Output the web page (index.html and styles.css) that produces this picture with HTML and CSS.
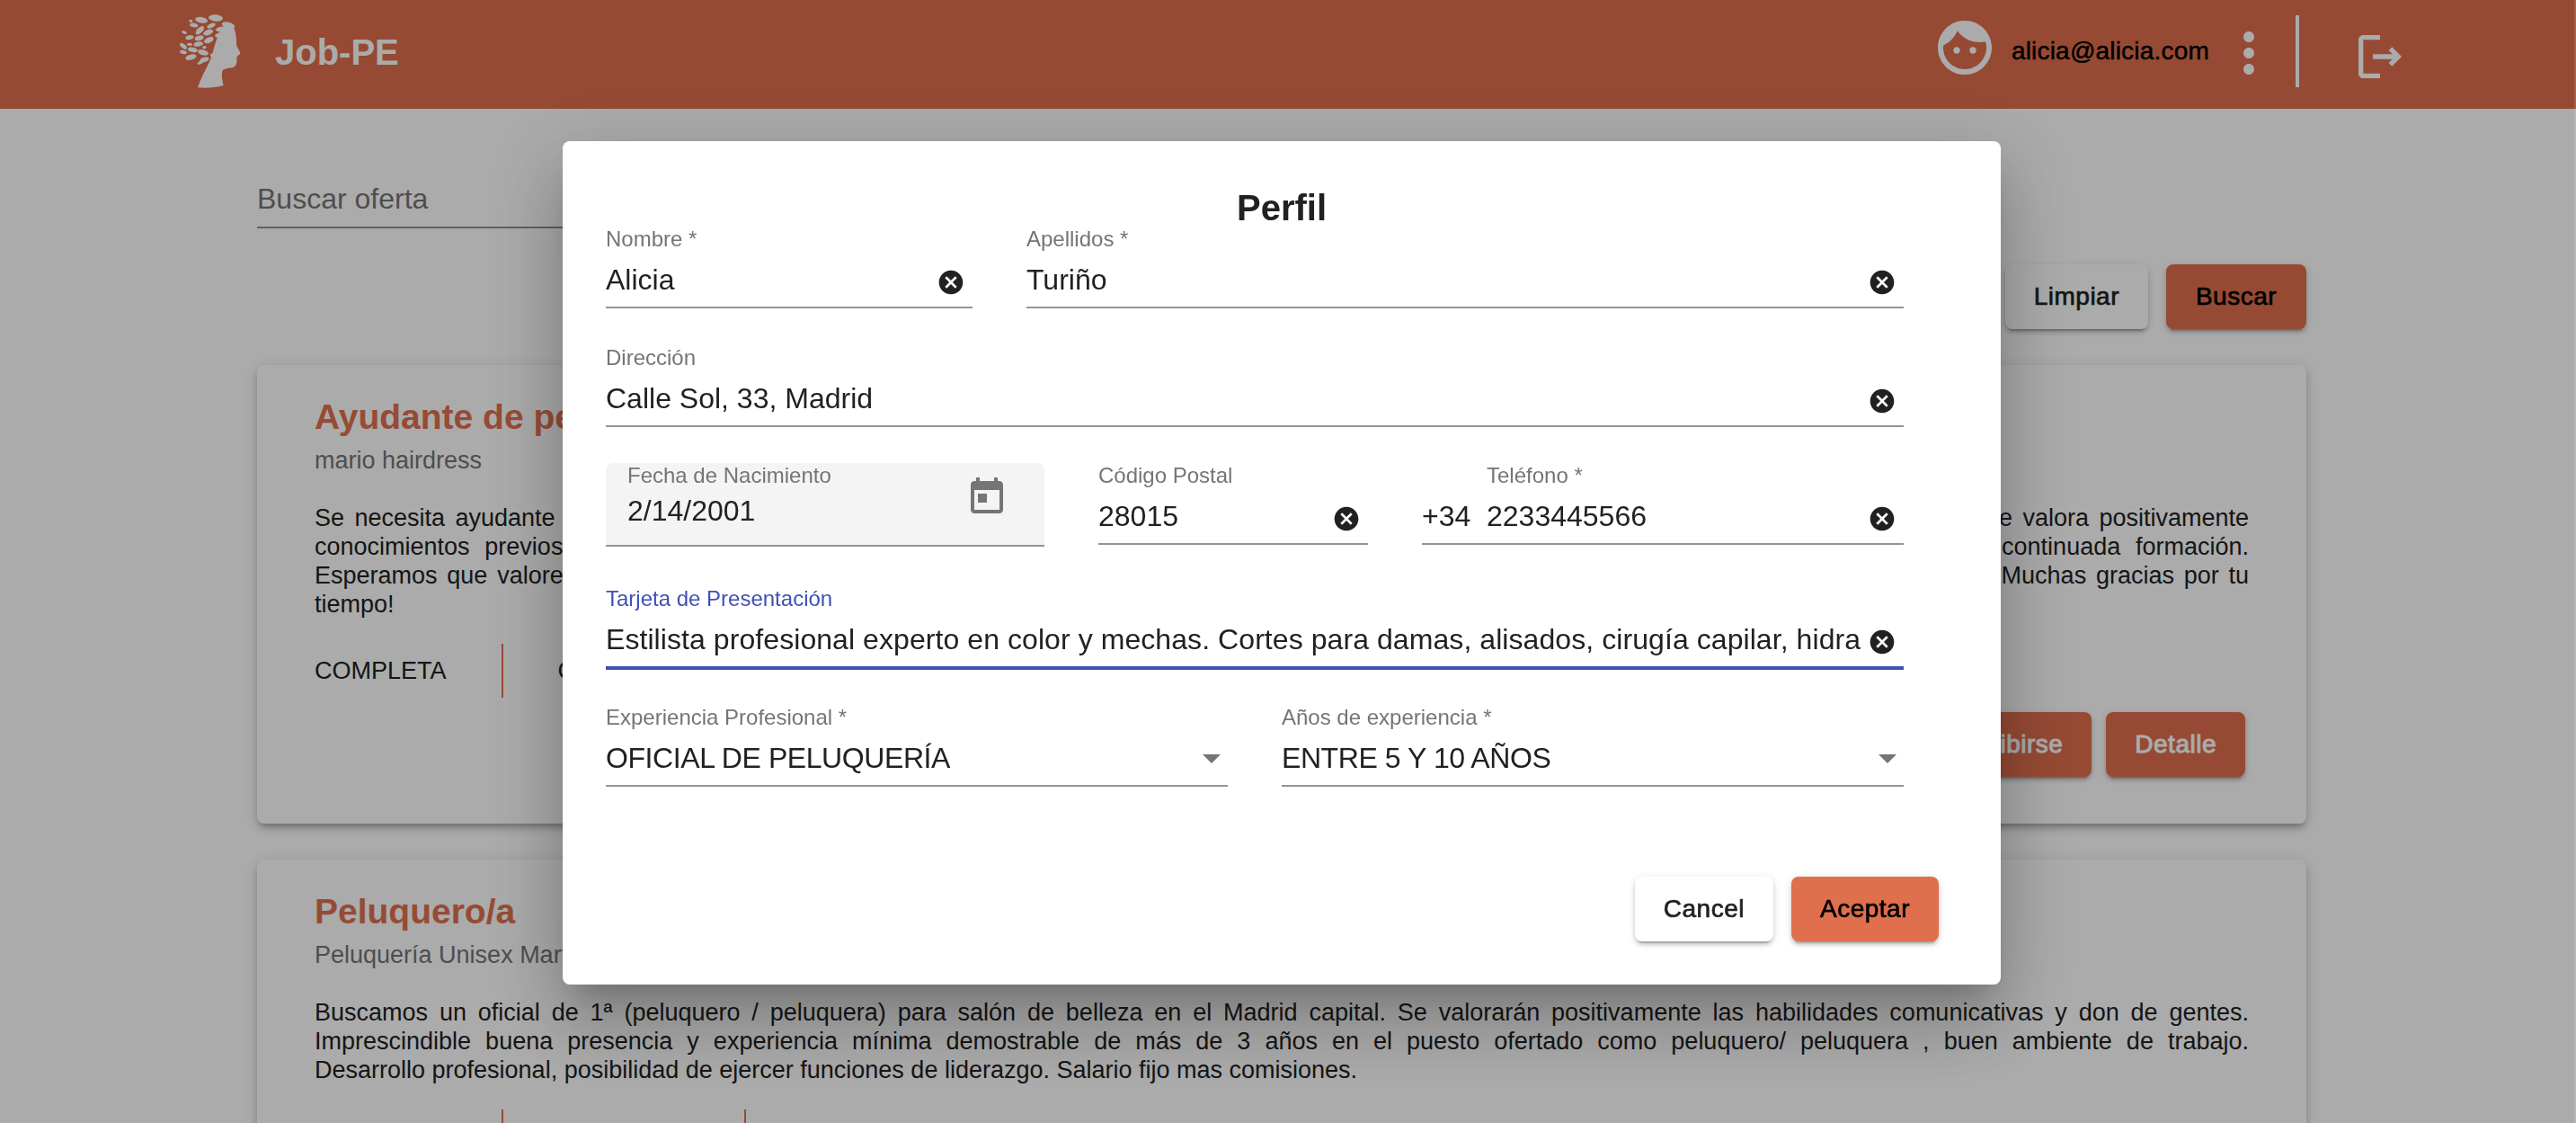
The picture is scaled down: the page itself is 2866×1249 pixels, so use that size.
FILE: index.html
```html
<!DOCTYPE html>
<html lang="es">
<head>
    <meta charset="UTF-8">
    <title>Job-PE</title>
    <link rel="stylesheet" href="styles.css">
</head>
<body>
<header class="topbar">
    <svg class="logo" viewBox="0 0 360 330" fill="#fff">
        <path d="M120 292 C130 262 145 235 160 205 C172 175 178 135 195 105 C205 85 222 72 232 80 C246 92 250 125 249 150 C252 160 262 172 262 179 C258 184 251 186 250 192 C252 205 250 218 240 224 C228 228 212 226 202 236 C198 255 203 272 206 285 C180 292 148 295 120 292 Z"/>
        <g>
            <ellipse cx="180" cy="60" rx="24" ry="11" transform="rotate(5 180 60)"/>
            <ellipse cx="132" cy="67" rx="21" ry="10" transform="rotate(10 132 67)"/>
            <ellipse cx="222" cy="84" rx="22" ry="10" transform="rotate(15 222 84)"/>
            <ellipse cx="107" cy="84" rx="14" ry="7" transform="rotate(10 107 84)"/>
            <ellipse cx="97" cy="70" rx="6" ry="5"/>
            <ellipse cx="127" cy="101" rx="18" ry="9" transform="rotate(-45 127 101)"/>
            <ellipse cx="165" cy="86" rx="15" ry="7" transform="rotate(-25 165 86)"/>
            <ellipse cx="197" cy="97" rx="17" ry="8" transform="rotate(-10 197 97)"/>
            <ellipse cx="155" cy="108" rx="17" ry="9" transform="rotate(-20 155 108)"/>
            <ellipse cx="192" cy="116" rx="15" ry="7" transform="rotate(-20 192 116)"/>
            <ellipse cx="93" cy="125" rx="14" ry="7" transform="rotate(-10 93 125)"/>
            <ellipse cx="125" cy="127" rx="15" ry="8" transform="rotate(-15 125 127)"/>
            <ellipse cx="157" cy="134" rx="17" ry="9" transform="rotate(-25 157 134)"/>
            <ellipse cx="75" cy="108" rx="9" ry="5" transform="rotate(20 75 108)"/>
            <ellipse cx="72" cy="154" rx="14" ry="7" transform="rotate(40 72 154)"/>
            <ellipse cx="93" cy="148" rx="9" ry="5"/>
            <ellipse cx="122" cy="147" rx="16" ry="8" transform="rotate(-8 122 147)"/>
            <ellipse cx="103" cy="166" rx="17" ry="8" transform="rotate(10 103 166)"/>
            <ellipse cx="142" cy="158" rx="7" ry="5"/>
            <ellipse cx="72" cy="174" rx="12" ry="6" transform="rotate(10 72 174)"/>
            <ellipse cx="138" cy="175" rx="18" ry="9" transform="rotate(15 138 175)"/>
            <ellipse cx="170" cy="186" rx="9" ry="6" transform="rotate(30 170 186)"/>
            <ellipse cx="97" cy="191" rx="19" ry="9" transform="rotate(-15 97 191)"/>
            <ellipse cx="142" cy="199" rx="16" ry="8" transform="rotate(-15 142 199)"/>
            <ellipse cx="128" cy="209" rx="10" ry="5" transform="rotate(-25 128 209)"/>
        </g>
    </svg>
    <span class="brand">Job-PE</span>
    <div class="user-area">
        <svg class="face-icon" viewBox="0 0 24 24"><path d="M9 11.75c-.69 0-1.25.56-1.25 1.25s.56 1.25 1.25 1.25 1.25-.56 1.25-1.25-.56-1.25-1.25-1.25zm6 0c-.69 0-1.25.56-1.25 1.25s.56 1.25 1.25 1.25 1.25-.56 1.25-1.25-.56-1.25-1.25-1.25zM12 2C6.48 2 2 6.48 2 12s4.48 10 10 10 10-4.48 10-10S17.52 2 12 2zm0 18c-4.41 0-8-3.59-8-8 0-.29.02-.58.05-.86 2.36-1.05 4.23-2.98 5.21-5.37C11.07 8.33 14.05 10 17.42 10c.78 0 1.53-.09 2.25-.26.21.71.33 1.47.33 2.26 0 4.41-3.59 8-8 8z"/></svg>
        <span class="user-mail">alicia@alicia.com</span>
        <svg class="more-icon" viewBox="0 0 24 24"><path d="M12 8c1.1 0 2-.9 2-2s-.9-2-2-2-2 .9-2 2 .9 2 2 2zm0 2c-1.1 0-2 .9-2 2s.9 2 2 2 2-.9 2-2-.9-2-2-2zm0 6c-1.1 0-2 .9-2 2s.9 2 2 2 2-.9 2-2-.9-2-2-2z"/></svg>
        <span class="user-divider"></span>
        <svg class="logout-icon" viewBox="0 0 24 24"><path d="M17 8l-1.41 1.41L17.17 11H9v2h8.17l-1.58 1.58L17 16l4-4-4-4zM5 5h7V3H5c-1.1 0-2 .9-2 2v14c0 1.1.9 2 2 2h7v-2H5V5z"/></svg>
    </div>
</header>

<main class="content">
    <div class="search">Buscar oferta</div>
    <div class="search-actions">
        <button class="btn btn-plain">Limpiar</button>
        <button class="btn btn-dark">Buscar</button>
    </div>

    <!-- Ofertas -->
    <article class="card">
        <h2 class="card-title">Ayudante de peluquería</h2>
        <p class="card-company">mario hairdress</p>
        <p class="card-text">
            <span class="line">Se necesita ayudante de peluquería para nuevo salón de belleza situado en pleno centro de Madrid capital. No es imprescindible tener experiencia, se valora positivamente</span>
            <span class="line">conocimientos previos en lavado, corte y color. Ofrecemos un buen ambiente de trabajo, contrato estable y la posibilidad de crecer con una continuada formación.</span>
            <span class="line">Esperamos que valores esta oportunidad y que nos hagas llegar tu candidatura lo más pronto posible a través de esta misma página web de empleo. Muchas gracias por tu</span>
            tiempo!
        </p>
        <div class="card-meta">
            <span class="meta-item">COMPLETA</span>
            <span class="meta-item">COMPLETA</span>
            <span class="meta-item">MADRID</span>
        </div>
        <div class="card-actions">
            <button class="btn btn-light">Inscribirse</button>
            <button class="btn btn-light">Detalle</button>
        </div>
    </article>

    <article class="card">
        <h2 class="card-title">Peluquero/a</h2>
        <p class="card-company">Peluquería Unisex Marta</p>
        <p class="card-text">
            <span class="line">Buscamos un oficial de 1ª (peluquero / peluquera) para salón de belleza en el Madrid capital. Se valorarán positivamente las habilidades comunicativas y don de gentes.</span>
            <span class="line">Imprescindible buena presencia y experiencia mínima demostrable de más de 3 años en el puesto ofertado como peluquero/ peluquera , buen ambiente de trabajo.</span>
            Desarrollo profesional, posibilidad de ejercer funciones de liderazgo. Salario fijo mas comisiones.
        </p>
        <div class="card-meta">
            <span class="meta-item">COMPLETA</span>
            <span class="meta-item">COMPLETA</span>
            <span class="meta-item">MADRID</span>
        </div>
    </article>
</main>

<!-- Perfil dialog -->
<div class="backdrop">
    <section class="dialog">
        <h1 class="dialog-title">Perfil</h1>
        <div class="form">
            <div class="row">
                <div class="field field-name">
                    <label class="field-label">Nombre *</label>
                    <div class="field-input"><span class="field-value">Alicia</span>
                        <svg class="clear-icon" viewBox="0 0 24 24"><path d="M12 2C6.47 2 2 6.47 2 12s4.47 10 10 10 10-4.47 10-10S17.53 2 12 2zm5 13.59L15.59 17 12 13.41 8.41 17 7 15.59 10.59 12 7 8.41 8.41 7 12 10.59 15.59 7 17 8.41 13.41 12 17 15.59z"/></svg>
                    </div>
                </div>
                <div class="field field-grow">
                    <label class="field-label">Apellidos *</label>
                    <div class="field-input"><span class="field-value">Turiño</span>
                        <svg class="clear-icon" viewBox="0 0 24 24"><path d="M12 2C6.47 2 2 6.47 2 12s4.47 10 10 10 10-4.47 10-10S17.53 2 12 2zm5 13.59L15.59 17 12 13.41 8.41 17 7 15.59 10.59 12 7 8.41 8.41 7 12 10.59 15.59 7 17 8.41 13.41 12 17 15.59z"/></svg>
                    </div>
                </div>
            </div>

            <div class="row row-address">
                <div class="field field-grow">
                    <label class="field-label">Dirección</label>
                    <div class="field-input"><span class="field-value">Calle Sol, 33, Madrid</span>
                        <svg class="clear-icon" viewBox="0 0 24 24"><path d="M12 2C6.47 2 2 6.47 2 12s4.47 10 10 10 10-4.47 10-10S17.53 2 12 2zm5 13.59L15.59 17 12 13.41 8.41 17 7 15.59 10.59 12 7 8.41 8.41 7 12 10.59 15.59 7 17 8.41 13.41 12 17 15.59z"/></svg>
                    </div>
                </div>
            </div>

            <div class="row row-details">
                <div class="field-date">
                    <div class="date-text">
                        <label class="field-label">Fecha de Nacimiento</label>
                        <span class="date-value">2/14/2001</span>
                    </div>
                    <svg class="date-icon" viewBox="0 0 24 24"><path d="M19 3h-1V1h-2v2H8V1H6v2H5c-1.11 0-1.99.9-1.99 2L3 19c0 1.1.89 2 2 2h14c1.1 0 2-.9 2-2V5c0-1.1-.9-2-2-2zm0 16H5V8h14v11zM7 10h5v5H7z"/></svg>
                </div>
                <div class="field field-postal">
                    <label class="field-label">Código Postal</label>
                    <div class="field-input"><span class="field-value">28015</span>
                        <svg class="clear-icon" viewBox="0 0 24 24"><path d="M12 2C6.47 2 2 6.47 2 12s4.47 10 10 10 10-4.47 10-10S17.53 2 12 2zm5 13.59L15.59 17 12 13.41 8.41 17 7 15.59 10.59 12 7 8.41 8.41 7 12 10.59 15.59 7 17 8.41 13.41 12 17 15.59z"/></svg>
                    </div>
                </div>
                <div class="field field-grow">
                    <label class="field-label field-label-phone">Teléfono *</label>
                    <div class="field-input"><span class="phone-prefix">+34</span><span class="field-value">2233445566</span>
                        <svg class="clear-icon" viewBox="0 0 24 24"><path d="M12 2C6.47 2 2 6.47 2 12s4.47 10 10 10 10-4.47 10-10S17.53 2 12 2zm5 13.59L15.59 17 12 13.41 8.41 17 7 15.59 10.59 12 7 8.41 8.41 7 12 10.59 15.59 7 17 8.41 13.41 12 17 15.59z"/></svg>
                    </div>
                </div>
            </div>

            <div class="row row-card">
                <div class="field field-grow field-focused">
                    <label class="field-label">Tarjeta de Presentación</label>
                    <div class="field-input"><span class="field-value field-value-long">Estilista profesional experto en color y mechas. Cortes para damas, alisados, cirugía capilar, hidra</span>
                        <svg class="clear-icon" viewBox="0 0 24 24"><path d="M12 2C6.47 2 2 6.47 2 12s4.47 10 10 10 10-4.47 10-10S17.53 2 12 2zm5 13.59L15.59 17 12 13.41 8.41 17 7 15.59 10.59 12 7 8.41 8.41 7 12 10.59 15.59 7 17 8.41 13.41 12 17 15.59z"/></svg>
                    </div>
                </div>
            </div>

            <div class="row row-selects">
                <div class="field field-half">
                    <label class="field-label">Experiencia Profesional *</label>
                    <div class="field-input"><span class="field-value field-value-caps">OFICIAL DE PELUQUERÍA</span>
                        <svg class="select-arrow" viewBox="7 10 10 5"><path d="M7 10l5 5 5-5z"/></svg>
                    </div>
                </div>
                <div class="field field-half">
                    <label class="field-label">Años de experiencia *</label>
                    <div class="field-input"><span class="field-value field-value-caps">ENTRE 5 Y 10 AÑOS</span>
                        <svg class="select-arrow" viewBox="7 10 10 5"><path d="M7 10l5 5 5-5z"/></svg>
                    </div>
                </div>
            </div>
        </div>

        <div class="dialog-actions">
            <button class="btn btn-white">Cancel</button>
            <button class="btn btn-accent">Aceptar</button>
        </div>
    </section>
</div>
</body>
</html>
```

FILE: styles.css
```css
* {
    box-sizing: border-box;
}
body {
    margin: 0;
    height: 1249px;
    overflow: hidden;
    background-color: #fff;
    color: #000;
    font-family: "Liberation Sans", Arial, sans-serif;
}
button {
    font-family: inherit;
}

/* Top bar */
.topbar {
    display: flex;
    align-items: flex-start;
    height: 121px;
    padding: 0 186px 0 180px;
    background-color: #e06f4d;
    color: #fff;
}
.logo {
    width: 120px;
    height: 110px;
}
.brand {
    margin: 35px 0 0 6px;
    font-size: 40px;
    line-height: 46px;
    font-weight: 700;
}
.user-area {
    display: flex;
    align-items: flex-start;
    margin-left: auto;
}
.user-area svg {
    fill: #fff;
    flex: none;
}
.face-icon {
    width: 72px;
    height: 72px;
    margin-top: 17px;
}
.user-mail {
    margin: 41px 0 0 16px;
    font-size: 28px;
    line-height: 32px;
    letter-spacing: 0.2px;
    color: #000;
    -webkit-text-stroke: 0.5px #000;
}
.more-icon {
    width: 72px;
    height: 72px;
    margin: 23px 0 0 8px;
}
.user-divider {
    width: 4px;
    height: 80px;
    margin: 17px 0 0 16px;
    background-color: #fff;
}
.logout-icon {
    width: 64px;
    height: 64px;
    margin: 31px 0 0 58px;
}

/* Page content */
.content {
    padding: 69px 300px 0 286px;
}
.search {
    width: 1000px;
    height: 64px;
    border-bottom: 2px solid #8f8f8f;
    font-size: 32px;
    line-height: 62px;
    color: #757575;
}
.search-actions {
    display: flex;
    justify-content: flex-end;
    gap: 20px;
    margin-top: 40px;
}
.btn {
    height: 72px;
    padding: 0 32px;
    border: 0;
    border-radius: 8px;
    font-size: 28px;
    letter-spacing: 0.5px;
    -webkit-text-stroke: 0.7px currentColor;
    box-shadow: 0 6px 2px -4px rgba(0,0,0,0.2), 0 4px 4px 0 rgba(0,0,0,0.14), 0 2px 10px 0 rgba(0,0,0,0.12);
}
.btn-plain,
.btn-white {
    background-color: #fff;
    color: #212121;
}
.btn-dark,
.btn-accent {
    background-color: #e06f4d;
    color: #000;
}
.btn-light {
    background-color: #e06f4d;
    color: #fff;
    -webkit-text-stroke: 1px #fff;
}
.btn-dark {
    width: 156px;
}

.card {
    margin-top: 40px;
    padding: 35px 64px 52px;
    border-radius: 8px;
    background-color: #fff;
    box-shadow: 0 6px 6px -4px rgba(0,0,0,0.2), 0 6px 8px 0 rgba(0,0,0,0.14), 0 2px 16px 0 rgba(0,0,0,0.12);
}
.card-title {
    margin: 0;
    font-size: 39px;
    line-height: 46px;
    font-weight: 700;
    color: #e0714f;
}
.card-company {
    margin: 9px 0 0;
    font-size: 27px;
    line-height: 32px;
    color: #757575;
}
.card-text {
    margin: 32px 0 0;
    font-size: 27px;
    line-height: 32px;
    color: #212121;
}
.line {
    display: block;
    text-align: justify;
    text-align-last: justify;
}
.card-meta {
    display: flex;
    margin-top: 28px;
}
.meta-item {
    height: 60px;
    padding: 0 61px;
    border-left: 2px solid #e0714f;
    font-size: 27px;
    line-height: 60px;
    color: #212121;
}
.meta-item:first-child {
    padding-left: 0;
    border-left: 0;
}
.card-actions {
    display: flex;
    justify-content: flex-end;
    gap: 16px;
    margin: 16px 4px 0 0;
}

/* Dialog */
.backdrop {
    position: fixed;
    top: 0;
    left: 0;
    right: 0;
    bottom: 0;
    display: flex;
    justify-content: center;
    align-items: flex-start;
    padding: 157px 12px 0 0;
    border-right: 2px solid rgba(255,255,255,0.12);
    background-color: rgba(0,0,0,0.33);
}
.dialog {
    width: 1600px;
    height: 938px;
    padding: 54px 48px 48px;
    border-radius: 8px;
    background-color: #fff;
    box-shadow: 0 22px 30px -14px rgba(0,0,0,0.2), 0 48px 76px 6px rgba(0,0,0,0.14), 0 18px 92px 16px rgba(0,0,0,0.12);
}
.dialog-title {
    margin: 0;
    font-size: 40px;
    line-height: 41px;
    font-weight: 700;
    text-align: center;
    color: #212121;
}
.form {
    padding-right: 60px;
}
.row {
    display: flex;
    align-items: flex-start;
    gap: 60px;
}
.row-address {
    margin-top: 41px;
}
.row-details {
    margin-top: 40px;
}
.row-card {
    margin-top: 44px;
}
.row-selects {
    margin-top: 39px;
}
.field {
    min-width: 0;
    border-bottom: 2px solid #949494;
}
.field-name {
    width: 408px;
}
.field-grow {
    flex: 1;
}
.field-postal {
    width: 300px;
}
.field-half {
    flex: 1;
}
.field-label {
    display: block;
    font-size: 24px;
    line-height: 28px;
    color: #757575;
}
.field-label-phone {
    padding-left: 72px;
}
.field-input {
    display: flex;
    align-items: center;
    height: 61px;
    padding-top: 2px;
    font-size: 32px;
    color: #212121;
}
.field-value {
    flex: 1;
    min-width: 0;
    overflow: hidden;
    white-space: nowrap;
}
.field-value-long {
    letter-spacing: 0.07px;
}
.field-value-caps {
    letter-spacing: -0.42px;
}
.phone-prefix {
    width: 72px;
}
.clear-icon {
    flex: none;
    width: 32px;
    height: 32px;
    margin: 5px 8px 0 8px;
    fill: #212121;
}
.select-arrow {
    flex: none;
    width: 20px;
    height: 10px;
    margin-right: 8px;
    fill: #757575;
}
.field-focused {
    border-bottom: 4px solid #3f51b5;
}
.field-focused .field-label {
    color: #3f51b5;
}
.field-date {
    display: flex;
    justify-content: space-between;
    width: 488px;
    height: 93px;
    padding: 0 40px 0 24px;
    border-bottom: 2px solid #949494;
    border-radius: 8px 8px 0 0;
    background-color: #f4f4f4;
}
.date-value {
    display: block;
    font-size: 32px;
    line-height: 50px;
    color: #212121;
}
.date-icon {
    width: 48px;
    height: 48px;
    margin-top: 14px;
    fill: #757575;
}
.dialog-actions {
    display: flex;
    justify-content: flex-end;
    gap: 20px;
    margin-top: 100px;
    padding-right: 21px;
}
```
